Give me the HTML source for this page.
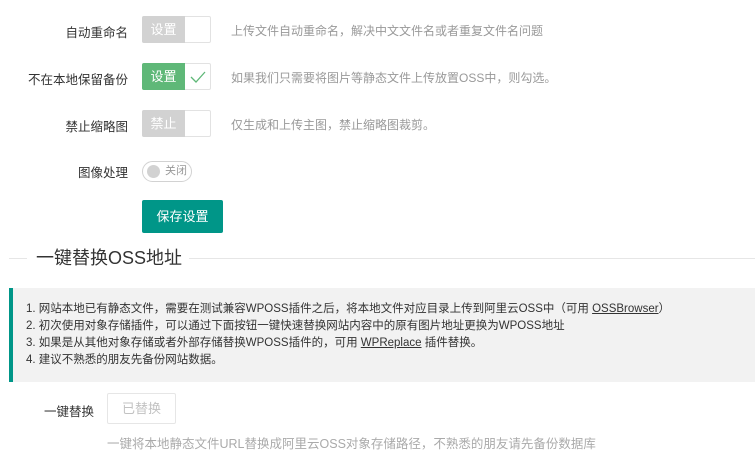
<!DOCTYPE html>
<html><head><meta charset="utf-8"><style>
*{margin:0;padding:0;box-sizing:border-box}
body{width:755px;height:475px;background:#fff;font-family:"Liberation Sans","Noto Sans CJK SC",sans-serif;font-size:13px;color:#333;position:relative;overflow:hidden}
.a{position:absolute;white-space:nowrap}
.lbl{right:627px;text-align:right;font-size:12.5px}
.sw{position:absolute;left:142px;width:69px;height:27px;border:1px solid #e2e2e2;border-radius:2px;background:#fff}
.sw .l{position:absolute;left:-1px;top:-1px;width:43px;height:27px;background:#d2d2d2;color:#fff;font-size:13px;line-height:27px;text-align:center;border-radius:2px 0 0 2px}
.sw.on .l{background:#5fb878}
.desc{left:231px;color:#999;font-size:12px}
.notice p{line-height:17px;font-size:11.5px;color:#333}
u{text-decoration:underline}
</style></head><body>
<div class="a lbl" style="top:22px">自动重命名</div>
<div class="sw" style="top:16px"><div class="l">设置</div></div>
<div class="a desc" style="top:22px">上传文件自动重命名，解决中文文件名或者重复文件名问题</div>

<div class="a lbl" style="top:69px">不在本地保留备份</div>
<div class="sw on" style="top:63px"><div class="l">设置</div>
<svg style="position:absolute;left:47px;top:6px" width="16" height="14"><path d="M1 7 L6 12 L15 2" fill="none" stroke="#5fb878" stroke-width="1.3"/></svg></div>
<div class="a desc" style="top:69px">如果我们只需要将图片等静态文件上传放置OSS中，则勾选。</div>

<div class="a lbl" style="top:116px">禁止缩略图</div>
<div class="sw" style="top:110px"><div class="l">禁止</div></div>
<div class="a desc" style="top:116px">仅生成和上传主图，禁止缩略图裁剪。</div>

<div class="a lbl" style="top:162px">图像处理</div>
<div class="a" style="left:142px;top:161px;width:50px;height:21px;border:1px solid #d2d2d2;border-radius:11px;background:#fff">
<div style="position:absolute;left:4px;top:3px;width:13px;height:13px;border-radius:50%;background:#d2d2d2"></div>
<div style="position:absolute;left:22px;top:3px;font-size:11px;color:#999;line-height:13px">关闭</div></div>

<div class="a" style="left:142px;top:200px;width:81px;height:33px;background:#009688;color:#fff;border-radius:2px;text-align:center;line-height:33px;font-size:13px">保存设置</div>

<div class="a" style="left:9px;top:258px;width:18px;height:1px;background:#e6e6e6"></div>
<div class="a" style="left:36px;top:246px;font-size:18px;color:#333;line-height:24px">一键替换OSS地址</div>
<div class="a" style="left:189px;top:258px;width:566px;height:1px;background:#e6e6e6"></div>

<div class="a notice" style="left:9px;top:288px;width:746px;height:94px;background:#f2f2f2;border-left:4px solid #009688;padding:13px 0 0 13px">
<p>1. 网站本地已有静态文件，需要在测试兼容WPOSS插件之后，将本地文件对应目录上传到阿里云OSS中（可用 <u>OSSBrowser</u>）</p>
<p>2. 初次使用对象存储插件，可以通过下面按钮一键快速替换网站内容中的原有图片地址更换为WPOSS地址</p>
<p>3. 如果是从其他对象存储或者外部存储替换WPOSS插件的，可用 <u>WPReplace</u> 插件替换。</p>
<p>4. 建议不熟悉的朋友先备份网站数据。</p>
</div>

<div class="a" style="left:44px;top:401px;font-size:12.5px">一键替换</div>
<div class="a" style="left:107px;top:393px;width:69px;height:31px;border:1px solid #e6e6e6;border-radius:2px;color:#c2c2c2;text-align:center;line-height:29px;font-size:13px">已替换</div>
<div class="a" style="left:107px;top:433px;color:#aaa;font-size:12.5px">一键将本地静态文件URL替换成阿里云OSS对象存储路径，不熟悉的朋友请先备份数据库</div>
</body></html>
